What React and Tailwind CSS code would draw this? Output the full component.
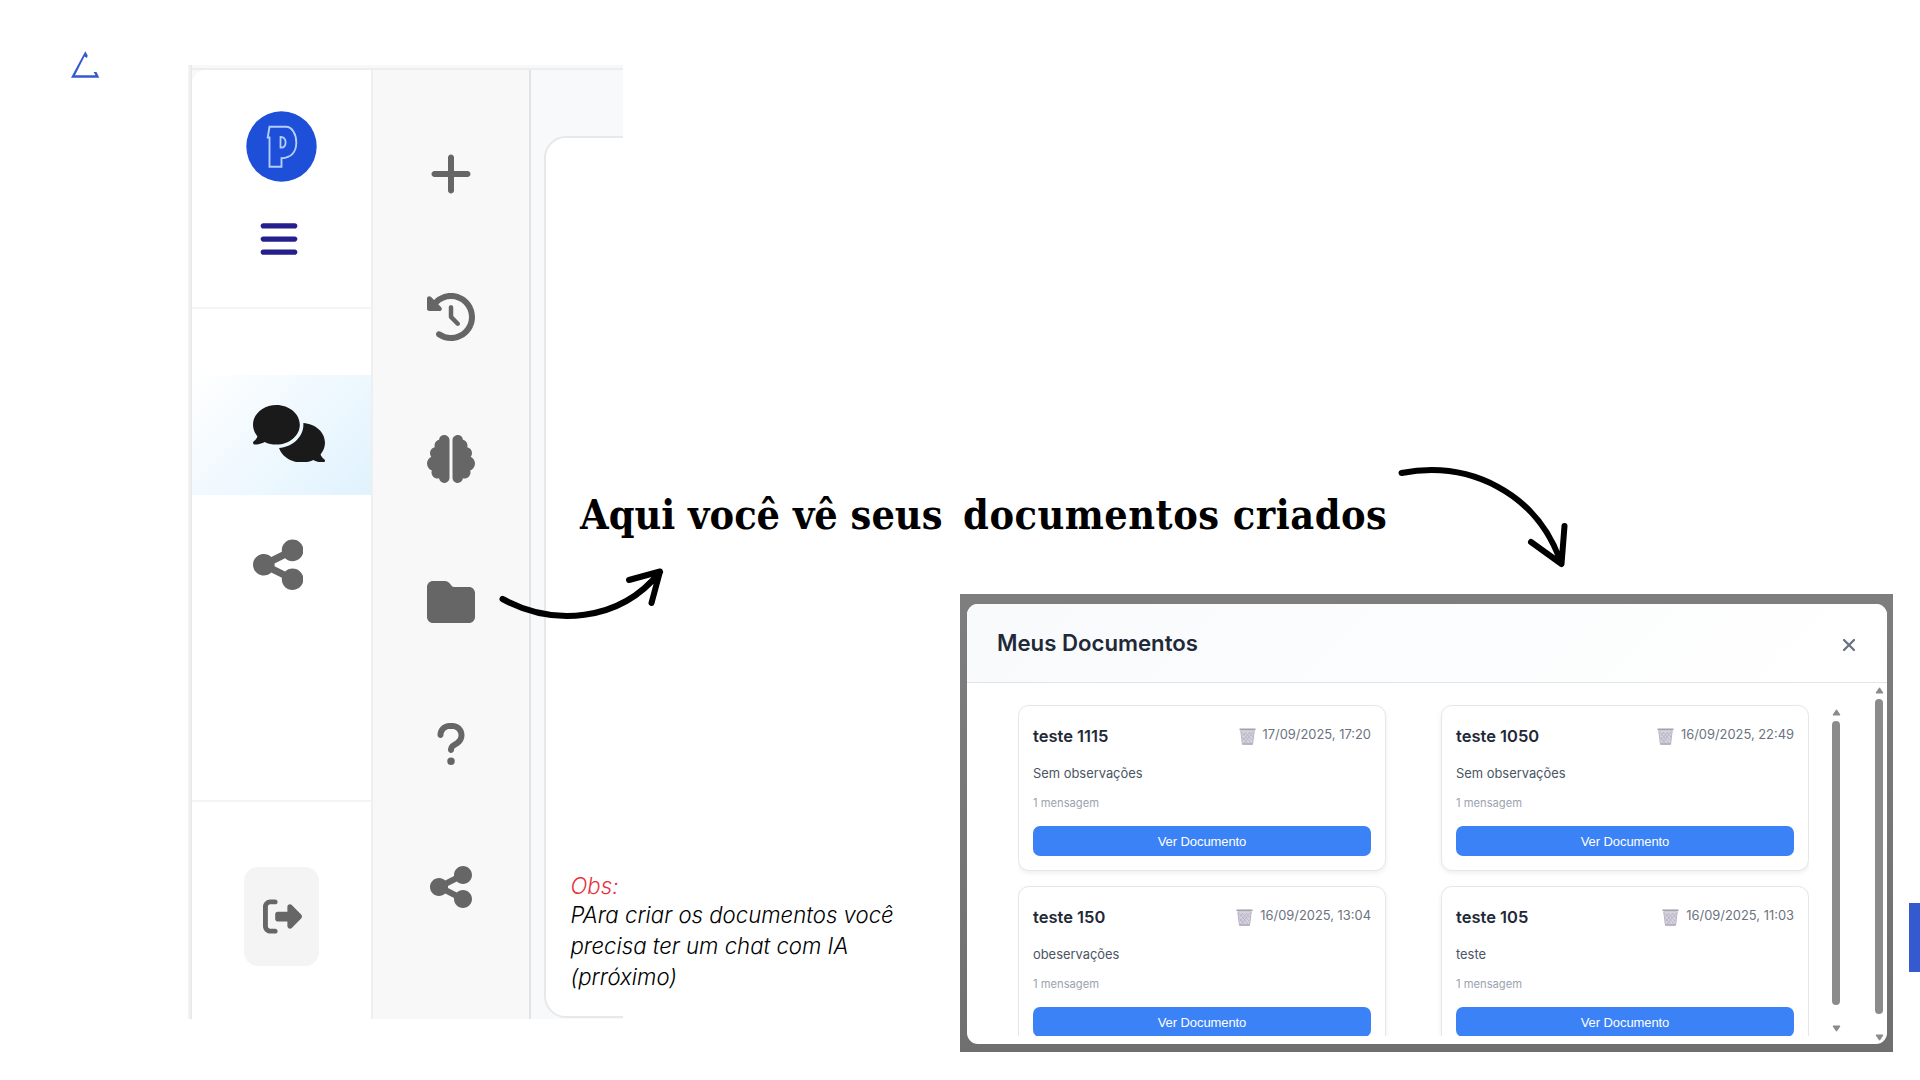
import React from "react";
import {
  FaPlus, FaClockRotateLeft, FaBrain, FaFolder, FaQuestion, FaShareNodes,
  FaComments, FaBars, FaRightFromBracket,
} from "react-icons/fa6";

const documents = [
  { title: "teste 1115", date: "17/09/2025, 17:20", note: "Sem observações" },
  { title: "teste 1050", date: "16/09/2025, 22:49", note: "Sem observações" },
  { title: "teste 150", date: "16/09/2025, 13:04", note: "obeservações" },
  { title: "teste 105", date: "16/09/2025, 11:03", note: "teste" },
];

const tools = [FaPlus, FaClockRotateLeft, FaBrain, FaFolder, FaQuestion, FaShareNodes];

function Trash() {
  return (
    <svg className="h-[17px] w-[17px] shrink-0" viewBox="0 0 17 17">
      <path d="M1.5 2H15.5L13.6 16.5H3.4Z" fill="#d6d3df" />
      <path d="M3 4l9 11M6 4l7 8M10 4l4 5M14 4L5 15M11 4L4 12M7 4L3.500 8M3.500 9l5 6" stroke="#b4afc2" strokeWidth="0.8" fill="none" />
      <path d="M0.500 1.300H16.500" stroke="#a5a2ad" strokeWidth="1.700" />
      <path d="M3.200 16H13.800" stroke="#aaa6b5" strokeWidth="1.500" />
      <path d="M1.800 3L3.400 16M15.200 3L13.600 16" stroke="#b8b4c3" strokeWidth="1" />
    </svg>
  );
}

function DocumentCard({ title, date, note }) {
  return (
    <article className="flex h-[165.500px] flex-col rounded-[11px] border border-[#e6e7ea] bg-white px-[14px] pt-[18px] shadow-[0_2px_5px_rgba(0,0,0,0.07)]">
      <div className="flex h-6 items-center justify-between">
        <h3 className="text-[16.500px] leading-6 font-semibold text-[#1f2937]">{title}</h3>
        <div className="flex items-center gap-[7px]">
          <div className="pt-[1px]"><Trash /></div>
          <span className="pb-[2px] text-[12.900px] leading-5 text-[#6b7280]">{date}</span>
        </div>
      </div>
      <p className="mt-[16px] text-[12.900px] leading-5 text-[#4b5563]">{note}</p>
      <p className="mt-[11px] text-[11.200px] leading-4 text-[#9ca3af]">1 mensagem</p>
      <button className="mt-[15px] h-[29.500px] w-full rounded-[7px] bg-[#3b82f6] pt-[1px] font-['Liberation_Sans',sans-serif] text-[13px] leading-none tracking-[-0.080px] text-white">
        Ver Documento
      </button>
    </article>
  );
}

function ScrollBar({ className }) {
  return (
    <div className={"flex w-[8px] shrink-0 flex-col items-center " + className}>
      <svg className="h-[7px] w-[9px] shrink-0" viewBox="0 0 9 7"><path d="M4.500 0.800L8 6H1Z" fill="#8b8b8b" stroke="#8b8b8b" strokeLinejoin="round" /></svg>
      <div className="mt-[5px] w-full flex-1 rounded-full bg-[#8b8b8b]" />
      <svg className="mt-[20px] h-[7px] w-[9px] shrink-0" viewBox="0 0 9 7"><path d="M4.500 6.200L8 1H1Z" fill="#8b8b8b" stroke="#8b8b8b" strokeLinejoin="round" /></svg>
    </div>
  );
}

function SidebarPreview() {
  return (
    <section className="absolute top-[65px] left-[188px] flex h-[954px] w-[435px] overflow-hidden bg-[#f8f8f8]">
      <div className="w-[4px] shrink-0 bg-linear-to-r from-[#f6f6f6] to-[#e6e7e8]" />
      <div className="flex min-w-0 flex-1 flex-col">
        <div className="h-[5px] shrink-0 border-b-2 border-[#ededee]" />
        <div className="flex flex-1">
          <nav className="flex w-[181px] shrink-0 flex-col rounded-tl-[14px] border-r-2 border-[#eeeff0] bg-white">
            <div className="flex h-[239px] flex-col items-center border-b-2 border-[#f3f4f4] pt-[41px]">
              <svg className="mr-[1px] h-[71px] w-[71px]" viewBox="0 0 71 71">
                <circle cx="35.500" cy="35.500" r="35.200" fill="#1d4fd9" />
                <path d="M23.500 15.800H40C46 15.800 50.300 23 50.300 31.500C50.300 40.500 45.500 46.800 35.500 47.200V55.800H23.500V26.500H21.700Z" fill="none" stroke="#b4cdfa" strokeWidth="1.900" />
                <path d="M34.500 26V36.700C38.500 37 39.600 34 39.600 31.200C39.600 28 37.800 25.800 34.500 26Z" fill="none" stroke="#b4cdfa" strokeWidth="1.800" />
              </svg>
              <FaBars className="mt-[36px] mr-[6px] text-[42px] text-[#251f8d]" />
            </div>
            <div className="flex h-[493px] flex-col border-b-2 border-[#f3f4f4] pt-[66px]">
              <div className="flex h-[120px] shrink-0 items-center bg-linear-[135deg] from-white to-[#e0f2fe] pl-[61px]">
                <FaComments className="mb-[3px] h-[57.600px] w-[72px] text-[#1a1a1a]" />
              </div>
              <div className="mt-[41px] pl-[61px]">
                <FaShareNodes className="h-[57.600px] w-[50.400px] text-[#666]" />
              </div>
            </div>
            <div className="flex flex-1 justify-center pt-[65px]">
              <div className="flex h-[99px] w-[75px] items-center justify-center rounded-[14px] bg-[#f4f4f4] pl-[1px]">
                <FaRightFromBracket className="text-[39px] text-[#666]" />
              </div>
            </div>
          </nav>
          <div className="flex w-[158px] shrink-0 flex-col items-center gap-[94.600px] border-r-2 border-[#e3e4e6] pt-[80px]">
            {tools.map((Icon, i) => (
              <Icon key={i} className="shrink-0 text-[48px] text-[#666]" />
            ))}
          </div>
          <div className="flex-1 overflow-hidden bg-[#f7f9fb] pt-[66px] pl-[13px]">
            <div className="h-[882px] w-[120px] rounded-[22px] border-2 border-[#e6e8ea] bg-white" />
          </div>
        </div>
      </div>
    </section>
  );
}

function DocumentsModal() {
  return (
    <section className="absolute top-[594px] left-[960px] h-[458px] w-[933px] bg-[#777] bg-linear-to-b from-[#7e7e7e] to-[#6f6f6f] pt-[10px] pl-[7px]">
      <div className="flex h-[440px] w-[920px] flex-col overflow-hidden rounded-[11px] bg-white">
        <header className="flex h-[79px] shrink-0 items-center justify-between border-b border-[#e2e4e8] bg-linear-[135deg] from-[#f8fafc] to-white pr-[32px] pl-[30px]">
          <h2 className="text-[22.200px] leading-8 font-semibold text-[#1f2937]">Meus Documentos</h2>
          <svg className="mt-[4px] h-[12px] w-[12px]" viewBox="0 0 12 12"><path d="M1 1L11 11M11 1L1 11" stroke="#6b7280" strokeWidth="2.300" strokeLinecap="round" /></svg>
        </header>
        <div className="flex h-[361px]">
          <div className="ml-[51px] grid h-[353px] w-[791px] shrink-0 grid-cols-[368px_368px] content-start gap-x-[55px] gap-y-[15.500px] overflow-hidden pt-[22px]">
            {documents.map((doc) => <DocumentCard key={doc.title} {...doc} />)}
          </div>
          <ScrollBar className="mt-[26px] ml-[23px] h-[323px]" />
          <ScrollBar className="mt-[4px] ml-[35px] h-[354px]" />
        </div>
      </div>
    </section>
  );
}

export default function App() {
  return (
    <main className="relative h-[1080px] w-[1920px] overflow-hidden bg-white font-['Inter',sans-serif]">
      <svg className="absolute top-[48px] left-[68px] h-[34px] w-[36px]" viewBox="0 0 36 34">
        <path d="M3 29.700L17.300 3.300L19.700 7.500L19 10L16.500 8.500L7 27.200H27.500L25.600 24H28.500L31.300 29.700Z" fill="#3559cf" />
      </svg>
      <SidebarPreview />
      <h1 className="absolute top-[485px] left-[580px] font-['DejaVu_Serif_Condensed','DejaVu_Serif',serif] text-[41px] leading-[60px] font-bold whitespace-pre text-black">
        Aqui você vê seus
        <span className="tracking-[-2.500px]">{"  "}</span>
        <span className="tracking-[0.500px]">documentos criados</span>
      </h1>
      <p className="absolute top-[870px] left-[570.500px] text-[22.200px] leading-[31px] font-light text-black italic">
        <span className="block h-[29px] text-[#e7323b]">Obs:</span>
        <span className="block">PAra criar os documentos você</span>
        <span className="block">precisa ter um chat com IA</span>
        <span className="block">(prróximo)</span>
      </p>
      <svg className="absolute top-[560px] left-[495px] h-[65px] w-[175px]" viewBox="495 560 175 65" fill="none" stroke="#000" strokeWidth="6" strokeLinecap="round" strokeLinejoin="round">
        <path d="M502.500 599C552 626 619 623 660 572M629 580L660 571.500L651.500 603" />
      </svg>
      <svg className="absolute top-[460px] left-[1390px] h-[112px] w-[185px]" viewBox="1390 460 185 112" fill="none" stroke="#000" strokeWidth="6" strokeLinecap="round" strokeLinejoin="round">
        <path d="M1401.500 473C1471 460 1536 494 1560 560M1531 542L1561.500 564L1564.500 526" />
      </svg>
      <DocumentsModal />
      <div className="absolute top-[903px] right-0 h-[69px] w-[11px] bg-[#3559cf]" />
    </main>
  );
}
